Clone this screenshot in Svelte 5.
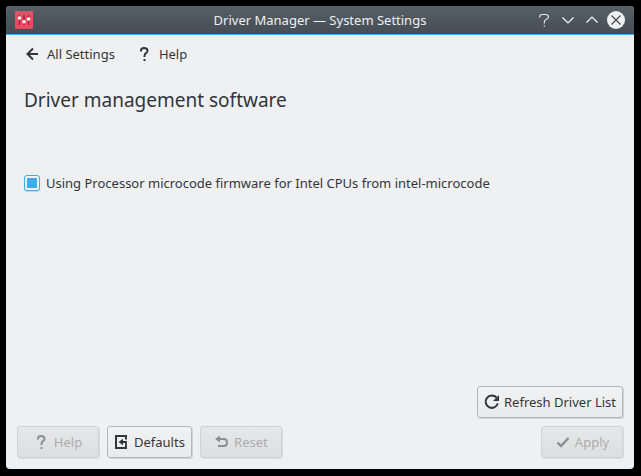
<script>
  let microcode = $state(true);
</script>

<div class="desktop">
  <div class="window">
    <header class="titlebar">
      <svg class="app-icon" viewBox="0 0 18 18" width="18" height="18" aria-hidden="true">
        <rect width="18" height="18" fill="#da4453" />
        <rect width="18" height="17" fill="#ed4a63" />
        <path d="M4.500 4v10M9 4v10M13.500 4v10" stroke="#a52f45" stroke-width="1.800" />
        <circle cx="4.500" cy="7" r="1.800" fill="#fff" />
        <circle cx="9" cy="10.800" r="1.800" fill="#fff" />
        <circle cx="13.500" cy="8" r="1.800" fill="#fff" />
      </svg>
      <h1>Driver Manager — System Settings</h1>
      <div class="controls">
        <button aria-label="What's this?">
          <svg viewBox="0 0 18 18" width="18" height="18" fill="none" stroke="#e4e6e7" stroke-width="1.200">
            <path d="M4.500 6.500Q4.500 3.500 7.500 3.500H10.500Q13.500 3.500 13.500 5.800Q13.500 7.500 11.500 8.300Q9.300 9.300 9.300 11V12.500" />
            <path d="M9.300 14v2" stroke="#aeb3b6" />
          </svg>
        </button>
        <button aria-label="Minimize">
          <svg viewBox="0 0 18 18" width="18" height="18" fill="none" stroke="#fcfcfc" stroke-width="1.200">
            <path d="M3.500 6.500L9 12l5.500-5.500" />
          </svg>
        </button>
        <button aria-label="Maximize">
          <svg viewBox="0 0 18 18" width="18" height="18" fill="none" stroke="#fcfcfc" stroke-width="1.200">
            <path d="M3.500 11.500L9 6l5.500 5.500" />
          </svg>
        </button>
        <button aria-label="Close">
          <svg viewBox="0 0 18 18" width="18" height="18" fill="none" stroke="#434a51" stroke-width="1.200">
            <circle cx="9" cy="9" r="9" fill="#eff0f1" stroke="none" />
            <path d="M4.500 4.500l9 9M13.500 4.500l-9 9" />
          </svg>
        </button>
      </div>
    </header>

    <nav class="toolbar">
      <button>
        <svg viewBox="0 0 16 16" width="16" height="16" fill="none" stroke="#31363b" stroke-width="2">
          <path d="M14 8H4M9 2.500L3.500 8L9 13.500" />
        </svg>
        All Settings
      </button>
      <button>
        <svg viewBox="0 0 16 16" width="16" height="16" fill="none" stroke="#31363b" stroke-width="2">
          <path d="M5 5.500V4.500Q5 2 8 2Q11.500 2 11.500 4.700Q11.500 6.200 10 7.200Q8.500 8.200 8.500 10V11M8.500 13v2" />
        </svg>
        Help
      </button>
    </nav>

    <main>
      <h2>Driver management software</h2>
      <label>
        <input type="checkbox" bind:checked={microcode} />
        Using Processor microcode firmware for Intel CPUs from intel-microcode
      </label>
    </main>

    <footer>
      <div class="row end">
        <button class="btn">
          <svg viewBox="0 0 16 16" width="16" height="16" fill="none" stroke="#31363b" stroke-width="2">
            <path d="M12.500 3.500A6.200 6.200 0 1 0 13.800 9.500" />
            <path d="M15 1v6H9z" fill="#31363b" stroke="none" />
          </svg>
          Refresh Driver List
        </button>
      </div>
      <div class="row">
        <button class="btn wide" disabled>
          <svg viewBox="0 0 16 16" width="16" height="16" fill="none" stroke="#8d8f91" stroke-width="2">
            <path d="M4 5.500V4.500Q4 2 7 2Q10.500 2 10.500 4.700Q10.500 6.200 9 7.200Q7.500 8.200 7.500 10V11M7.500 13v2" />
          </svg>
          Help
        </button>
        <button class="btn">
          <svg viewBox="0 0 16 16" width="16" height="16" fill="none" stroke="#31363b" stroke-width="2">
            <path d="M12 5.500V2H2v12h10v-1.500" />
            <path d="M8 8h4v5" stroke-width="1.800" />
            <path d="M4.500 8L9 4.800v6.400z" fill="#31363b" stroke="none" />
          </svg>
          Defaults
        </button>
        <button class="btn wide" disabled>
          <svg viewBox="0 0 16 16" width="16" height="16" fill="none" stroke="#8d8f91" stroke-width="2">
            <path d="M5 5h5Q13 5 13 8.500T10 12H4" />
            <path d="M1 5L6 1.500v7z" fill="#8d8f91" stroke="none" />
          </svg>
          Reset
        </button>
        <button class="btn wide apply" disabled>
          <svg viewBox="0 0 16 16" width="16" height="16" fill="none" stroke="#8d8f91" stroke-width="2.400">
            <path d="M2.500 8.500l3.500 3.500L13.500 4" />
          </svg>
          Apply
        </button>
      </div>
    </footer>
  </div>
</div>

<style>
  :global(body) {
    margin: 0;
    background: #000;
  }
  .desktop,
  .desktop * {
    box-sizing: border-box;
  }
  .desktop {
    display: flex;
    min-height: 100vh;
    padding: 6px 7px 7px 6px;
    font: 13px/18px "Noto Sans", sans-serif;
    color: #31363b;
    background: #000;
  }
  .window {
    flex: 1;
    display: flex;
    flex-direction: column;
    overflow: hidden;
    border-radius: 4px;
    background: #eff0f1;
  }
  button {
    font: inherit;
    color: inherit;
    margin: 0;
    padding: 0;
    border: 0;
    background: none;
  }
  svg {
    display: block;
    flex: none;
  }
  .titlebar {
    display: grid;
    grid-template-columns: 1fr auto 1fr;
    align-items: center;
    height: 29px;
    padding: 0 9px;
    border-bottom: 1px solid #3daee9;
    background: linear-gradient(#566067, #464d54);
    color: #eff0f1;
  }
  h1 {
    margin: 0;
    font: inherit;
  }
  .controls {
    display: flex;
    justify-content: flex-end;
    gap: 6px;
  }
  .toolbar {
    display: flex;
    gap: 21px;
    padding: 10px 18px;
  }
  .toolbar button {
    display: flex;
    align-items: center;
    gap: 7px;
  }
  main {
    flex: 1;
    padding: 13px 18px;
  }
  h2 {
    margin: 0 0 60px;
    font-size: 19px;
    line-height: 28px;
    font-weight: 400;
  }
  label {
    display: flex;
    align-items: center;
    gap: 6px;
  }
  input {
    appearance: none;
    width: 16px;
    height: 16px;
    margin: 0;
    border: 1px solid #3daee9;
    border-radius: 3px;
    box-shadow: 0 1px 1px #c9cccf;
    background: #f1f2f3;
  }
  input:checked {
    background: linear-gradient(#3daee9, #3daee9) center / 10px 10px no-repeat #f1f2f3;
  }
  footer {
    display: flex;
    flex-direction: column;
    gap: 8px;
    padding: 0 11px 11px;
  }
  .row {
    display: flex;
    gap: 8px;
  }
  .end {
    justify-content: flex-end;
  }
  .btn {
    display: flex;
    align-items: center;
    justify-content: center;
    gap: 4px;
    height: 32px;
    padding: 0 6px;
    border: 1px solid #b5b7b9;
    border-radius: 3px;
    background: linear-gradient(#f1f2f3, #e9eaeb);
    box-shadow: 1px 1px #d0d2d4;
  }
  .btn:disabled {
    color: #abadaf;
    border-color: #cfd1d3;
    background: linear-gradient(#e6e7e8, #dddedf);
    box-shadow: 1px 1px #dadcde;
  }
  .wide {
    min-width: 82px;
  }
  .apply {
    margin-left: auto;
  }
</style>
